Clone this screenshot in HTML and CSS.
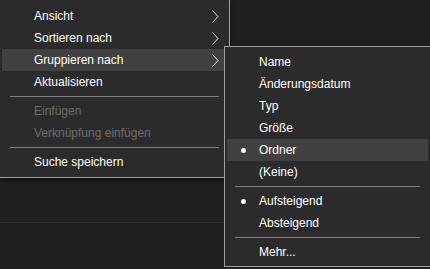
FILE: index.html
```html
<!DOCTYPE html>
<html lang="de">
<head>
  <meta charset="UTF-8" />
  <meta name="viewport" content="width=device-width, initial-scale=1.0" />
  <title>Kontextmenü</title>
  <link rel="stylesheet" href="styles.css">
</head>
<body>
  <div class="menu">
    <div class="item"><span class="mark"></span><span class="label">Ansicht</span>
      <svg class="arrow" width="7" height="13" viewBox="0 0 7 13"><polyline points="0.5,0.5 6,6.5 0.5,12.5" /></svg></div>
    <div class="item"><span class="mark"></span><span class="label">Sortieren nach</span>
      <svg class="arrow" width="7" height="13" viewBox="0 0 7 13"><polyline points="0.5,0.5 6,6.5 0.5,12.5" /></svg></div>
    <div class="item active"><span class="mark"></span><span class="label">Gruppieren nach</span>
      <svg class="arrow" width="7" height="13" viewBox="0 0 7 13"><polyline points="0.5,0.5 6,6.5 0.5,12.5" /></svg></div>
    <div class="item"><span class="mark"></span><span class="label">Aktualisieren</span></div>
    <div class="sep"></div>
    <div class="item disabled"><span class="mark"></span><span class="label">Einfügen</span></div>
    <div class="item disabled"><span class="mark"></span><span class="label">Verknüpfung einfügen</span></div>
    <div class="sep"></div>
    <div class="item"><span class="mark"></span><span class="label">Suche speichern</span></div>
  </div>
  <div class="rule"></div>

  <div class="menu submenu">
    <div class="item"><span class="mark"></span><span class="label">Name</span></div>
    <div class="item"><span class="mark"></span><span class="label">Änderungsdatum</span></div>
    <div class="item"><span class="mark"></span><span class="label">Typ</span></div>
    <div class="item"><span class="mark"></span><span class="label">Größe</span></div>
    <div class="item active"><span class="mark"><i class="dot"></i></span><span class="label">Ordner</span></div>
    <div class="item"><span class="mark"></span><span class="label">(Keine)</span></div>
    <div class="sep"></div>
    <div class="item"><span class="mark"><i class="dot"></i></span><span class="label">Aufsteigend</span></div>
    <div class="item"><span class="mark"></span><span class="label">Absteigend</span></div>
    <div class="sep"></div>
    <div class="item"><span class="mark"></span><span class="label">Mehr...</span></div>
  </div>
</body>
</html>
```

FILE: styles.css
```css
body {
  margin: 0;
  width: 430px;
  height: 269px;
  overflow: hidden;
  position: relative;
  background: #1f1f1f;
  font-family: "Segoe UI", "Liberation Sans", sans-serif;
  font-size: 12px;
  color: #fff;
}
.menu {
  width: 225px;
  margin: -1px 0 0 -1px;
  padding: 5px 2px 4px;
  background: #2b2b2b;
  border: 1px solid #a0a0a0;
  box-shadow: 0 2px 4px rgba(0, 0, 0, 0.6);
}
.item {
  display: flex;
  align-items: center;
  height: 22px;
  padding-right: 8px;
}
.item.active {
  background: #414141;
}
.item.disabled {
  color: #6d6d6d;
}
.mark {
  width: 32px;
  flex: none;
  display: flex;
  justify-content: center;
}
.label {
  flex: 1;
  white-space: nowrap;
}
.arrow {
  flex: none;
}
.arrow polyline {
  fill: none;
  stroke: #e6e6e6;
  stroke-width: 1;
}
.dot {
  width: 5px;
  height: 5px;
  border-radius: 50%;
  background: #fff;
  margin-left: 1px;
}
.sep {
  height: 1px;
  margin: 3px 8px;
  background: #808080;
}
.rule {
  height: 1px;
  margin-top: 44px;
  background: #2a2a2a;
}
.submenu {
  position: absolute;
  left: 224px;
  top: 46px;
  width: 201px;
  margin: 0;
  padding: 4px 2px 3px;
  box-shadow: none;
}
```
